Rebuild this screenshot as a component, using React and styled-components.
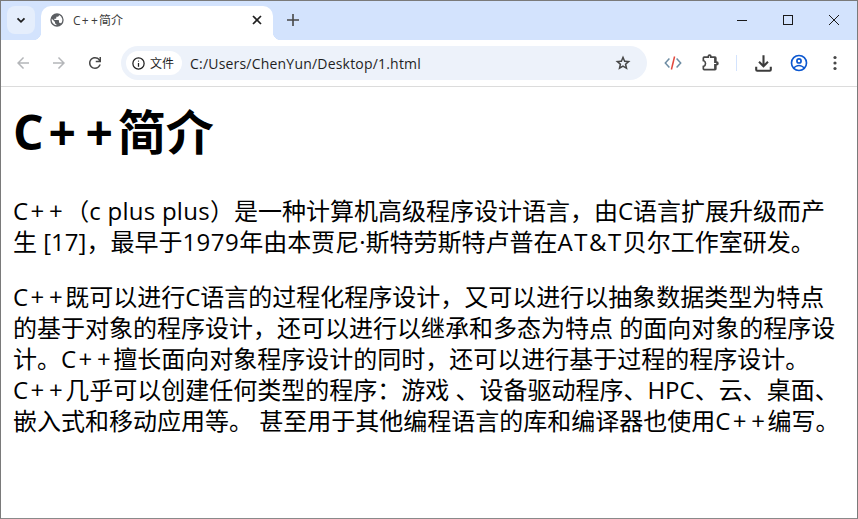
import React from 'react';
import styled, { createGlobalStyle } from 'styled-components';

const Global = createGlobalStyle`
html, body { margin: 0; padding: 0; background: #fff; }
body { font-family: 'Open Sans', 'Noto Sans CJK SC', sans-serif; text-spacing-trim: space-all; font-kerning: none; }
`;

const UI = `'Open Sans', 'Noto Sans CJK SC', sans-serif`;

const Icon = ({ d, size = 18, color = '#474747', children, view = 24 }) => (
  <svg width={size} height={size} viewBox={`0 0 ${view} ${view}`} fill={color}>
    {d ? <path d={d} /> : children}
  </svg>
);

// latin runs that come out wider in the original font
const tracking = { 'c plus plus': '0.27px', '1979': '0.5px', 'AT&T': '1.5px' };

const spaced = text =>
  text.split(/(\+|c plus plus|1979|AT&T)/).map((part, i) => {
    if (part === '+') return <Plus key={i}>+</Plus>;
    if (tracking[part]) return <Tracked key={i} $ls={tracking[part]}>{part}</Tracked>;
    return part;
  });

const lines1 = [
  'C++（c plus plus）是一种计算机高级程序设计语言，由C语言扩展升级而产',
  '生 [17]，最早于1979年由本贾尼·斯特劳斯特卢普在AT&T贝尔工作室研发。',
];

const lines2 = [
  'C++既可以进行C语言的过程化程序设计，又可以进行以抽象数据类型为特点',
  '的基于对象的程序设计，还可以进行以继承和多态为特点 的面向对象的程序设',
  '计。C++擅长面向对象程序设计的同时，还可以进行基于过程的程序设计。',
  'C++几乎可以创建任何类型的程序：游戏 、设备驱动程序、HPC、云、桌面、',
  '嵌入式和移动应用等。 甚至用于其他编程语言的库和编译器也使用C++编写。',
];

export default function App() {
  return (
    <Win>
      <Global />
      <TabStrip>
        <TabSearch>
          <svg width="12" height="12" viewBox="0 0 12 12" fill="none" stroke="#1f1f1f" strokeWidth="1.8">
            <path d="M2.5 4.3 6 7.8l3.5-3.5" />
          </svg>
        </TabSearch>
        <Tab>
          <Icon size={16} color="#5b5e62" view={24}>
            <path d="M12 2a10 10 0 1 0 0 20 10 10 0 0 0 0-20zm-1 17.9A8 8 0 0 1 4.2 10.2L9 15v1c0 1.1.9 2 2 2v1.9zm6.9-2.5A2 2 0 0 0 16 16h-1v-3c0-.6-.4-1-1-1H8v-2h2c.6 0 1-.4 1-1V7h2c1.1 0 2-.9 2-2v-.4a8 8 0 0 1 2.9 12.8z" />
          </Icon>
          <TabTitle>{spaced('C++简介')}</TabTitle>
          <svg width="12" height="12" viewBox="0 0 12 12" fill="none" stroke="#1f1f1f" strokeWidth="1.7">
            <path d="M2 2l8 8M10 2l-8 8" />
          </svg>
        </Tab>
        <NewTab>
          <svg width="14" height="14" viewBox="0 0 14 14" fill="none" stroke="#474747" strokeWidth="1.6">
            <path d="M7 1v12M1 7h12" />
          </svg>
        </NewTab>
        <WinControls>
          <WinBtn>
            <svg width="12" height="12" viewBox="0 0 12 12" stroke="#1a1a1a"><path d="M1 6.5h10" /></svg>
          </WinBtn>
          <WinBtn>
            <svg width="12" height="12" viewBox="0 0 12 12" fill="none" stroke="#1a1a1a"><rect x="1.5" y="1.5" width="9" height="9" /></svg>
          </WinBtn>
          <WinBtn>
            <svg width="12" height="12" viewBox="0 0 12 12" stroke="#1a1a1a"><path d="M1 1l10 10M11 1 1 11" /></svg>
          </WinBtn>
        </WinControls>
      </TabStrip>

      <Toolbar>
        <NavBtn><Icon color="#b4b6b9" d="M7.8 13l5.6 5.6L12 20l-8-8 8-8 1.4 1.4L7.8 11H20v2z" /></NavBtn>
        <NavBtn><Icon color="#b4b6b9" d="M16.2 13H4v-2h12.2l-5.6-5.6L12 4l8 8-8 8-1.4-1.4z" /></NavBtn>
        <NavBtn><Icon d="M12 20c-2.2 0-4.1-.8-5.7-2.3S4 14.200 4 12s.8-4.100 2.300-5.700S9.800 4 12 4c1.300 0 2.500.3 3.600.8 1 .5 1.900 1.300 2.400 2.200V4h2v7h-7V9h4.200c-.5-.9-1.200-1.700-2.100-2.200S13.100 6 12 6c-1.700 0-3.100.6-4.300 1.700S6 10.300 6 12s.6 3.100 1.700 4.300S10.300 18 12 18c1.300 0 2.500-.4 3.500-1.100s1.700-1.700 2.100-2.900h2.100c-.5 1.800-1.400 3.200-2.900 4.300-1.400 1.100-3 1.700-4.800 1.700z" /></NavBtn>
        <Omnibox>
          <Chip>
            <Icon size={15} color="#1f1f1f" d="M11 17h2v-6h-2zm1-8a1 1 0 1 0 0-2 1 1 0 0 0 0 2zm0 13a10 10 0 1 1 0-20 10 10 0 0 1 0 20zm0-2a8 8 0 1 0 0-16 8 8 0 0 0 0 16z" />
            <ChipLabel>文件</ChipLabel>
          </Chip>
          <Url>C:/Users/ChenYun/Desktop/1.html</Url>
          <Star>
            <Icon size={18} d="M8.850 16.825l3.150-1.900 3.150 1.925-.825-3.600 2.775-2.400-3.650-.325L12 7.125l-1.450 3.375-3.650.325 2.775 2.425zM5.825 21l1.625-7.025L2 9.250l7.200-.625L12 2l2.800 6.625 7.200.625-5.450 4.725L18.175 21 12 17.275z" />
          </Star>
        </Omnibox>
        <ToolBtn $first>
          <svg width="18" height="18" viewBox="0 0 18 18" fill="none" strokeWidth="1.5">
            <path d="M5 4.500.9 9 5 13.500" stroke="#6d8ca3" transform="translate(.4 0)" />
            <path d="M13 4.500 17.100 9 13 13.500" stroke="#6d8ca3" transform="translate(-.4 0)" />
            <path d="M10.600 2.500 7.400 15.500" stroke="#e2483d" />
          </svg>
        </ToolBtn>
        <ToolBtn>
          <Icon size={20} d="M8.800 21H5a2 2 0 0 1-2-2v-3.800a2.700 2.700 0 0 0 0-5.400V6a2 2 0 0 1 2-2h4a2.500 2.500 0 0 1 5 0h4a2 2 0 0 1 2 2v4a2.500 2.500 0 0 1 0 5v4a2 2 0 0 1-2 2zM5 19h11.900v-5.900h2.100a.600.600 0 0 0 0-1.200h-2.100V6H12V4a.600.600 0 0 0-1 0v2H5v2.300a4.700 4.700 0 0 1 0 8.400z" />
        </ToolBtn>
        <Separator />
        <ToolBtn>
          <Icon size={25} color="#3c3c3c" d="M12 16l-5-5 1.400-1.450L11 12.150V4h2v8.150l2.600-2.600L17 11zM6 20a2 2 0 0 1-2-2v-3h2v3h12v-3h2v3a2 2 0 0 1-2 2z" />
        </ToolBtn>
        <ToolBtn>
          <Icon size={20} color="#0b57d0" d="M12 2a10 10 0 1 0 0 20 10 10 0 0 0 0-20zm0 18a7.900 7.900 0 0 1-5-1.800c1.200-1.300 3-2.200 5-2.200s3.800.9 5 2.200a7.900 7.900 0 0 1-5 1.800zm6.300-3.100C16.700 15.100 14.500 14 12 14s-4.700 1.100-6.300 2.900A8 8 0 1 1 18.300 16.900zM12 6a3.500 3.500 0 1 0 0 7 3.500 3.500 0 0 0 0-7zm0 5a1.500 1.500 0 1 1 0-3 1.500 1.500 0 0 1 0 3z" />
        </ToolBtn>
        <ToolBtn>
          <svg width="18" height="18" viewBox="0 0 18 18" fill="#474747">
            <circle cx="9" cy="3.500" r="1.600" /><circle cx="9" cy="9" r="1.600" /><circle cx="9" cy="14.500" r="1.600" />
          </svg>
        </ToolBtn>
      </Toolbar>

      <Page>
        <Heading>{spaced('C++简介')}</Heading>
        <Para>{lines1.map(l => <Line key={l}>{spaced(l)}</Line>)}</Para>
        <Para>{lines2.map(l => <Line key={l}>{spaced(l)}</Line>)}</Para>
      </Page>
    </Win>
  );
}

const Win = styled.div`
box-sizing: border-box;
width: 858px;
height: 519px;
border: 1px solid #7a7a7a;
border-bottom-color: #8a8a8a;
background: #fff;
display: flex;
flex-direction: column;
overflow: hidden;
`;

const TabStrip = styled.div`
height: 39px;
flex: none;
background: #d3e3fd;
display: flex;
align-items: flex-end;
padding-left: 6px;
`;

const TabSearch = styled.div`
width: 28px;
height: 28px;
margin-bottom: 6px;
border-radius: 8px;
background: #e5eefc;
display: flex;
align-items: center;
justify-content: center;
`;

const Tab = styled.div`
position: relative;
box-sizing: border-box;
width: 232px;
height: 34px;
margin-left: 6px;
padding: 0 10px 6px 8px;
background: #fff;
border-radius: 10px 10px 0 0;
display: flex;
align-items: center;
&::before, &::after {
  content: '';
  position: absolute;
  bottom: 0;
  width: 8px;
  height: 8px;
}
&::before {
  left: -8px;
  background: radial-gradient(circle at 0 0, transparent 8px, #fff 8.5px);
}
&::after {
  right: -8px;
  background: radial-gradient(circle at 100% 0, transparent 8px, #fff 8.5px);
}
`;

const TabTitle = styled.span`
flex: 1;
margin-left: 8px;
font-family: ${UI};
font-size: 12px;
color: #3c3c3c;
`;

const NewTab = styled.div`
width: 28px;
height: 28px;
margin: 0 0 6px 6px;
display: flex;
align-items: center;
justify-content: center;
`;

const WinControls = styled.div`
margin-left: auto;
align-self: flex-start;
display: flex;
`;

const WinBtn = styled.div`
width: 46px;
height: 38px;
display: flex;
align-items: center;
justify-content: center;
`;

const Toolbar = styled.div`
height: 47px;
flex: none;
box-sizing: border-box;
background: #fff;
border-radius: 8px 8px 0 0;
border-bottom: 1px solid #dcdcdc;
display: flex;
align-items: center;
padding: 0 3px 0 4px;
position: relative;
&::before {
  content: '';
  position: absolute;
  inset: 0 0 auto 0;
  height: 8px;
  z-index: -1;
  background: #d3e3fd;
}
`;

const NavBtn = styled.div`
width: 36px;
height: 36px;
display: flex;
align-items: center;
justify-content: center;
`;

const Omnibox = styled.div`
flex: none;
box-sizing: border-box;
width: 526px;
height: 34px;
margin-left: 8px;
padding: 0 6px 0 5px;
border-radius: 17px;
background: #edf2fa;
display: flex;
align-items: center;
`;

const Chip = styled.div`
box-sizing: border-box;
width: 56px;
height: 24px;
border-radius: 12px;
background: #fff;
padding-left: 5px;
display: flex;
align-items: center;
`;

const ChipLabel = styled.span`
margin-left: 4px;
font-family: ${UI};
font-size: 12px;
color: #1f1f1f;
`;

const Url = styled.span`
flex: 1;
margin-left: 8px;
font-family: ${UI};
font-size: 14px;
letter-spacing: 0.2px;
color: #1f1f1f;
`;

const Star = styled.div`
width: 36px;
display: flex;
justify-content: center;
`;

const ToolBtn = styled.div`
width: 36px;
height: 36px;
margin: ${p => (p.$first ? '0 1px 0 8px' : '0')};
display: flex;
align-items: center;
justify-content: center;
`;

const Separator = styled.div`
width: 1px;
height: 16px;
margin: 0 8px;
background: #d3e3fd;
`;

const Page = styled.main`
flex: 1;
padding: 10px 12px 0;
color: #000;
font-family: 'Open Sans', 'Noto Sans CJK SC', sans-serif;
`;

const Heading = styled.h1`
margin: 0 0 28px;
font-size: 48px;
line-height: 70px;
font-weight: 700;
`;

const Para = styled.p`
margin: 0 0 24px;
font-size: 24px;
line-height: 31px;
`;

const Line = styled.span`
display: block;
white-space: nowrap;
`;

const Plus = styled.span`
padding: 0 0.1em;
`;

const Tracked = styled.span`
letter-spacing: ${p => p.$ls};
`;
